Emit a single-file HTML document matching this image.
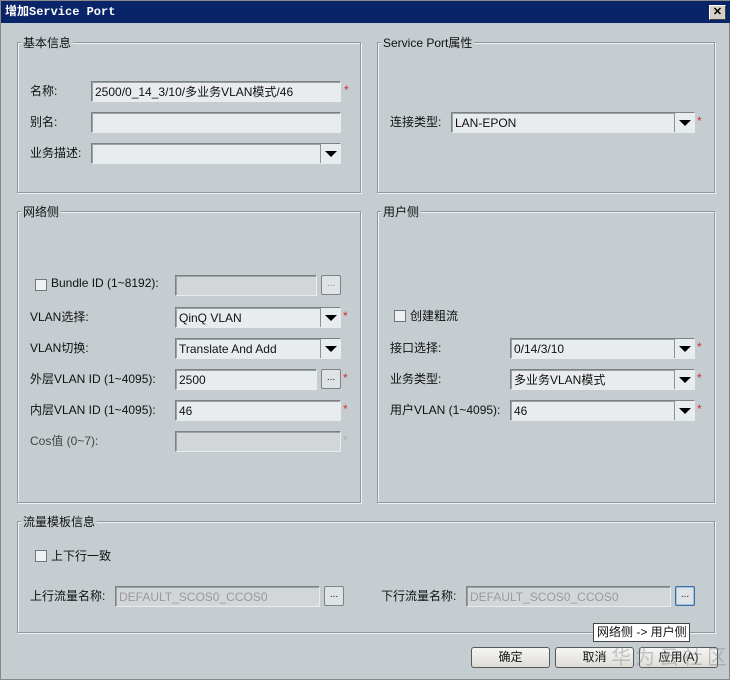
<!DOCTYPE html>
<html><head><meta charset="utf-8"><style>
*{box-sizing:border-box;margin:0;padding:0}
html{width:730px;height:680px;overflow:hidden}
body{width:730px;height:680px;background:#c5cdd1;font-family:"Liberation Sans","Noto Sans CJK SC",sans-serif;font-size:12px;color:#111;position:relative;overflow:hidden;border:1px solid #888}
.a{position:absolute;white-space:nowrap}
.l{margin-top:-2px}
.title{left:0;top:0;width:730px;height:22px;background:#0a246a;color:#fff;font-weight:bold;font-family:"Liberation Mono","Noto Sans CJK SC",monospace;font-size:12px;line-height:22px;padding-left:4px}
.close{left:708px;top:4px;width:17px;height:15px;background:#d4d0c8;border:1px solid;border-color:#fff #404040 #404040 #fff;color:#000;font-size:11px;line-height:12px;text-align:center;font-weight:bold}
.grp{border:1px solid #8f989c;box-shadow:inset 1px 1px 0 #eef2f4,1px 1px 0 #eef2f4}
.gl{background:#c5cdd1;padding:0 2px;font-size:12px}
.in{background:#e9ecee;border:1px solid;border-color:#7a8286 #e8ecee #e8ecee #7a8286;box-shadow:inset 1px 1px 0 #9aa2a6;height:21px;line-height:20px;padding-left:3px;white-space:nowrap;overflow:hidden}
.dis{background:#d3d6d8;color:#999}
.dd{border-left:1px solid #8a9296;width:20px;height:19px;position:absolute;right:0;top:0;background:#e9ecee}
.dd:after{content:"";position:absolute;left:4px;top:7px;border-left:6px solid transparent;border-right:6px solid transparent;border-top:6px solid #000}
.st{color:#d03030;font-size:12px}
.btn{background:#dfe3e5;border:1px solid #7c8488;border-radius:2px;text-align:center;font-size:10px;line-height:16px}
.cb{width:12px;height:12px;background:#eef0f2;border:1px solid #70787c}
.pb{background:linear-gradient(#f6f6f4,#dedcd6);border:1px solid #55595c;border-radius:3px;text-align:center;line-height:19px;height:21px;width:79px}
</style></head><body>
<div class="a title">增加Service Port</div>
<div class="a close">✕</div>

<div class="a grp" style="left:16px;top:41px;width:344px;height:151px"></div>
<div class="a gl" style="left:20px;top:33px">基本信息</div>
<div class="a l" style="left:29px;top:83px">名称:</div>
<div class="a in" style="left:90px;top:80px;width:250px">2500/0_14_3/10/多业务VLAN模式/46</div>
<div class="a st" style="left:343px;top:82px">*</div>
<div class="a l" style="left:29px;top:114px">别名:</div>
<div class="a in" style="left:90px;top:111px;width:250px"></div>
<div class="a l" style="left:29px;top:145px">业务描述:</div>
<div class="a in" style="left:90px;top:142px;width:250px"><div class="dd"></div></div>

<div class="a grp" style="left:376px;top:41px;width:338px;height:151px"></div>
<div class="a gl" style="left:380px;top:33px">Service Port属性</div>
<div class="a l" style="left:389px;top:114px">连接类型:</div>
<div class="a in" style="left:450px;top:111px;width:244px">LAN-EPON<div class="dd"></div></div>
<div class="a st" style="left:696px;top:113px">*</div>

<div class="a grp" style="left:16px;top:210px;width:344px;height:292px"></div>
<div class="a gl" style="left:20px;top:202px">网络侧</div>
<div class="a cb" style="left:34px;top:278px"></div>
<div class="a l" style="left:50px;top:277px">Bundle ID (1~8192):</div>
<div class="a in dis" style="left:174px;top:274px;width:142px"></div>
<div class="a btn" style="left:320px;top:274px;width:20px;height:20px;color:#888">...</div>
<div class="a l" style="left:29px;top:309px">VLAN选择:</div>
<div class="a in" style="left:174px;top:306px;width:166px">QinQ VLAN<div class="dd"></div></div>
<div class="a st" style="left:342px;top:308px">*</div>
<div class="a l" style="left:29px;top:340px">VLAN切换:</div>
<div class="a in" style="left:174px;top:337px;width:166px">Translate And Add<div class="dd"></div></div>
<div class="a l" style="left:29px;top:371px">外层VLAN ID (1~4095):</div>
<div class="a in" style="left:174px;top:368px;width:142px">2500</div>
<div class="a btn" style="left:320px;top:368px;width:20px;height:20px">...</div>
<div class="a st" style="left:342px;top:370px">*</div>
<div class="a l" style="left:29px;top:402px">内层VLAN ID (1~4095):</div>
<div class="a in" style="left:174px;top:399px;width:166px">46</div>
<div class="a st" style="left:342px;top:401px">*</div>
<div class="a l" style="left:29px;top:433px;color:#444">Cos值 (0~7):</div>
<div class="a in dis" style="left:174px;top:430px;width:166px"></div>
<div class="a st" style="left:342px;top:432px;color:#a8b0b4">*</div>

<div class="a grp" style="left:376px;top:210px;width:338px;height:292px"></div>
<div class="a gl" style="left:380px;top:202px">用户侧</div>
<div class="a cb" style="left:393px;top:309px"></div>
<div class="a l" style="left:409px;top:308px">创建粗流</div>
<div class="a l" style="left:389px;top:340px">接口选择:</div>
<div class="a in" style="left:509px;top:337px;width:185px">0/14/3/10<div class="dd"></div></div>
<div class="a st" style="left:696px;top:339px">*</div>
<div class="a l" style="left:389px;top:371px">业务类型:</div>
<div class="a in" style="left:509px;top:368px;width:185px">多业务VLAN模式<div class="dd"></div></div>
<div class="a st" style="left:696px;top:370px">*</div>
<div class="a l" style="left:389px;top:402px">用户VLAN (1~4095):</div>
<div class="a in" style="left:509px;top:399px;width:185px">46<div class="dd"></div></div>
<div class="a st" style="left:696px;top:401px">*</div>

<div class="a grp" style="left:16px;top:520px;width:698px;height:112px"></div>
<div class="a gl" style="left:20px;top:512px">流量模板信息</div>
<div class="a cb" style="left:34px;top:549px"></div>
<div class="a l" style="left:50px;top:548px">上下行一致</div>
<div class="a l" style="left:29px;top:588px">上行流量名称:</div>
<div class="a in dis" style="left:114px;top:585px;width:205px">DEFAULT_SCOS0_CCOS0</div>
<div class="a btn" style="left:323px;top:585px;width:20px;height:20px">...</div>
<div class="a l" style="left:380px;top:588px">下行流量名称:</div>
<div class="a in dis" style="left:465px;top:585px;width:205px">DEFAULT_SCOS0_CCOS0</div>
<div class="a btn" style="left:674px;top:585px;width:20px;height:20px;border-color:#3a6ea5;box-shadow:inset 0 0 0 1px #9cc0e0">...</div>

<div class="a pb" style="left:470px;top:646px">确定</div>
<div class="a pb" style="left:554px;top:646px">取消</div>
<div class="a pb" style="left:638px;top:646px">应用(A)</div>
<div class="a" style="left:592px;top:622px;width:97px;height:19px;background:#fff;border:1px solid #444;line-height:17px;padding-left:3px;font-size:12px">网络侧 -&gt; 用户侧</div>
<div class="a" style="left:610px;top:640px;font-size:20px;color:rgba(120,130,135,.4);letter-spacing:4px">华为云社区</div>
</body></html>
